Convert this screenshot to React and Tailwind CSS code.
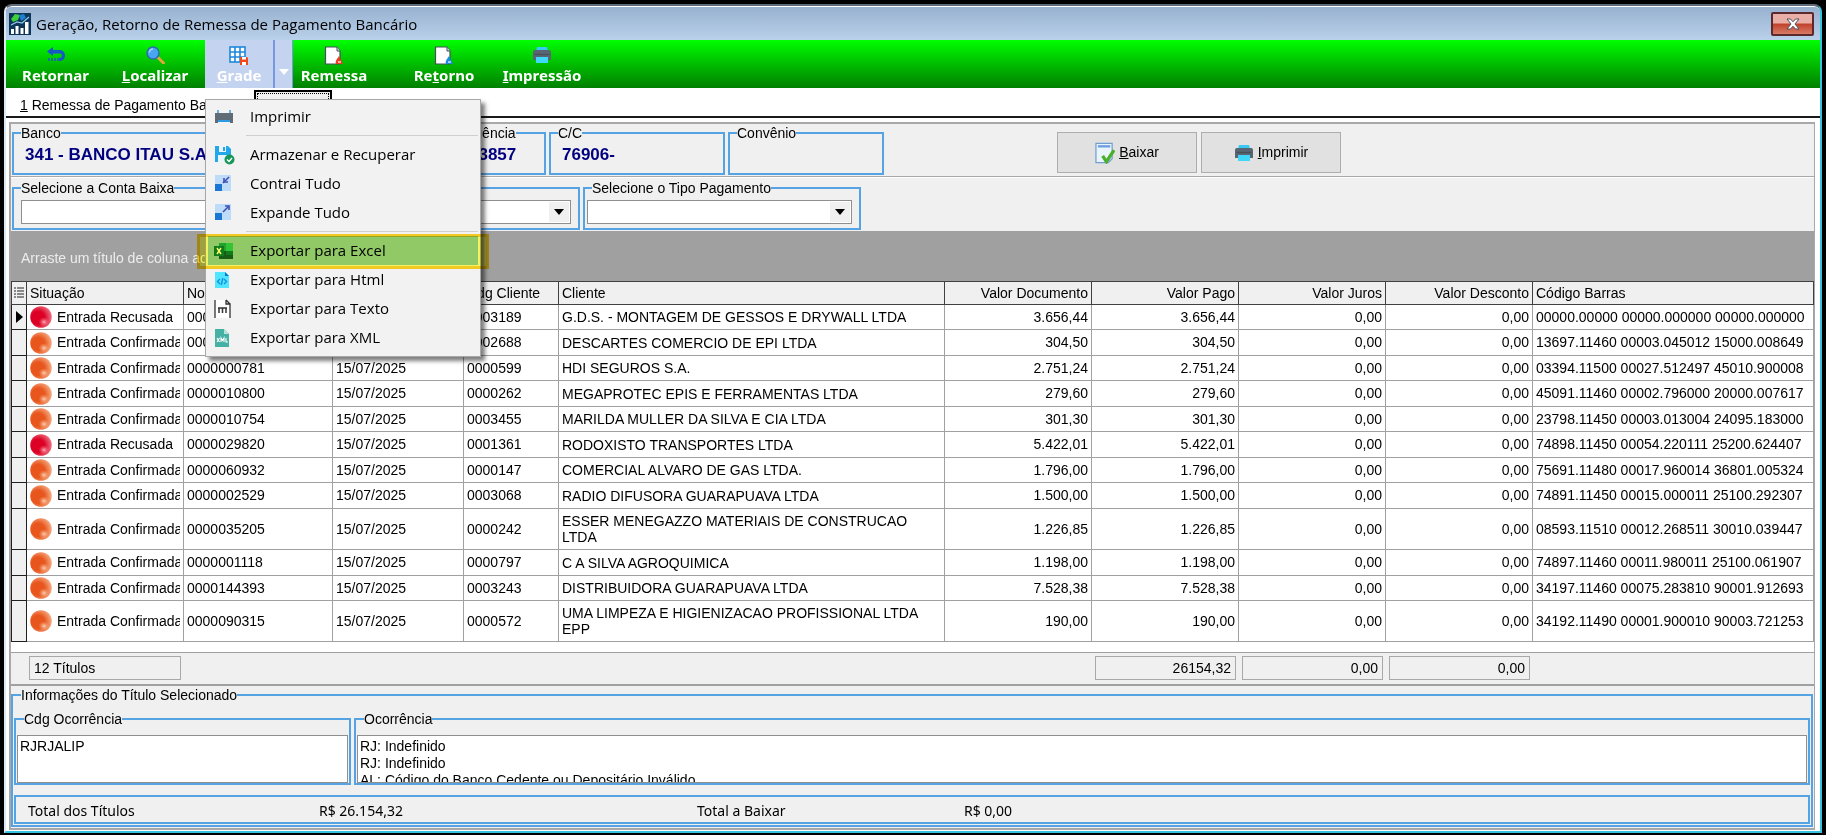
import clsx from "clsx";

const ROWS = [
    { ok: false, numero: "0000012231", codigo: "0003189", cliente: "G.D.S. - MONTAGEM DE GESSOS E DRYWALL LTDA", doc: "3.656,44", barras: "00000.00000 00000.000000 00000.000000" },
    { ok: true, numero: "0000015000", codigo: "0002688", cliente: "DESCARTES COMERCIO DE EPI LTDA", doc: "304,50", barras: "13697.11460 00003.045012 15000.008649" },
    { ok: true, numero: "0000000781", codigo: "0000599", cliente: "HDI SEGUROS S.A.", doc: "2.751,24", barras: "03394.11500 00027.512497 45010.900008" },
    { ok: true, numero: "0000010800", codigo: "0000262", cliente: "MEGAPROTEC EPIS E FERRAMENTAS LTDA", doc: "279,60", barras: "45091.11460 00002.796000 20000.007617" },
    { ok: true, numero: "0000010754", codigo: "0003455", cliente: "MARILDA MULLER DA SILVA E CIA LTDA", doc: "301,30", barras: "23798.11450 00003.013004 24095.183000" },
    { ok: false, numero: "0000029820", codigo: "0001361", cliente: "RODOXISTO TRANSPORTES LTDA", doc: "5.422,01", barras: "74898.11450 00054.220111 25200.624407" },
    { ok: true, numero: "0000060932", codigo: "0000147", cliente: "COMERCIAL ALVARO DE GAS LTDA.", doc: "1.796,00", barras: "75691.11480 00017.960014 36801.005324" },
    { ok: true, numero: "0000002529", codigo: "0003068", cliente: "RADIO DIFUSORA GUARAPUAVA LTDA", doc: "1.500,00", barras: "74891.11450 00015.000011 25100.292307" },
    { ok: true, numero: "0000035205", codigo: "0000242", cliente: "ESSER MENEGAZZO MATERIAIS DE CONSTRUCAO LTDA", doc: "1.226,85", barras: "08593.11510 00012.268511 30010.039447", tall: true },
    { ok: true, numero: "0000001118", codigo: "0000797", cliente: "C A SILVA AGROQUIMICA", doc: "1.198,00", barras: "74897.11460 00011.980011 25100.061907" },
    { ok: true, numero: "0000144393", codigo: "0003243", cliente: "DISTRIBUIDORA GUARAPUAVA LTDA", doc: "7.528,38", barras: "34197.11460 00075.283810 90001.912693" },
    { ok: true, numero: "0000090315", codigo: "0000572", cliente: "UMA LIMPEZA E HIGIENIZACAO PROFISSIONAL LTDA EPP", doc: "190,00", barras: "34192.11490 00001.900010 90003.721253", tall: true },
];

/* ---------- icons ---------- */

function AppIcon() {
    return (
        <svg width="22" height="22" viewBox="0 0 22 22" aria-hidden="true">
            <rect width="22" height="22" fill="#0d3557" />
            <path d="M2 6 6 1l5 1-2 5-5 2z" fill="#3ecf3a" />
            <path d="M10 2l5-1 2 4-5 3z" fill="#1f7fd0" />
            <path d="M2 12 8 9l5 1 7-6" stroke="#8fc6ee" strokeWidth="1.2" fill="none" />
            <path d="M2 21v-5h3v5zM6.500 21v-8h3v8zM11.500 21v-6h3v6zM16 21V9h3.500v12z" fill="#fff" />
        </svg>
    );
}

function BackIcon() {
    return (
        <svg width="20" height="18" viewBox="0 0 20 18" aria-hidden="true">
            <path d="M1 5.500 7 1v3h6c4 0 6 2.500 6 5.500S17 15 13.500 15H13v-3c2 0 3-1 3-2.500S15 7.500 13 7.500H7V10z" fill="#1757c9" />
            <path d="M3 12v3M6 12v3M9 12v3M12 12v3" stroke="#1757c9" strokeWidth="1.400" />
        </svg>
    );
}

function SearchIcon() {
    return (
        <svg width="20" height="18" viewBox="0 0 20 18" aria-hidden="true">
            <path d="m12.500 11 6 6" stroke="#e0a63c" strokeWidth="3" strokeLinecap="round" />
            <circle cx="8" cy="7" r="6" fill="#4aa5f0" stroke="#2c6dab" strokeWidth="1.500" />
            <path d="M4.500 6.500A3.500 3.500 0 0 1 8 3" stroke="#a8d8ff" strokeWidth="1.500" fill="none" />
        </svg>
    );
}

function GridIcon() {
    return (
        <svg width="20" height="19" viewBox="0 0 20 19" aria-hidden="true">
            <rect x="1" y="1" width="15" height="15" fill="#fff" stroke="#1e88dc" strokeWidth="1.600" />
            <path d="M6 1v15M11 1v15M1 6h15M1 11h15" stroke="#1e88dc" strokeWidth="1.600" />
            <path d="M11 11h7l1 1v7h-8z" fill="#f04a1c" />
            <path d="M13 11h4v2.500h-4zM13 16h4v3h-4z" fill="#fff" />
        </svg>
    );
}

function SheetIcon({ color }) {
    return (
        <svg width="20" height="19" viewBox="0 0 20 19" aria-hidden="true">
            <path d="M1.500 1H13l3 4v13H1.500z" fill="#fff" stroke="#45505c" strokeWidth="1.200" />
            <path d="M13 1v4h3" fill="#d7dde3" stroke="#45505c" strokeWidth="1" />
            <path d="m15 10 4 8h-7c-1-2 0-4 3-8z" fill={color} />
            <path d="M14 16h3" stroke="#fff" strokeWidth="1.200" />
        </svg>
    );
}

function PrinterIcon() {
    return (
        <svg width="20" height="18" viewBox="0 0 20 18" aria-hidden="true">
            <path d="M5 1h10l1 4H4z" fill="#38c8f5" />
            <path d="M1 6q0-2 2-2h14q2 0 2 2v8H1z" fill="#586572" />
            <path d="M4 11h12v6H4z" fill="#3fd8fb" />
            <path d="M2.500 8.500h15" stroke="#465059" strokeWidth="1.200" />
        </svg>
    );
}

function MenuPrinterIcon() {
    return (
        <svg width="20" height="16" viewBox="0 0 20 16" aria-hidden="true">
            <path d="M4 1v4M16 1v4" stroke="#3d9be0" strokeWidth="1.500" />
            <path d="M1 4h18v10h-3v-3H4v3H1z" fill="#5f6b77" />
            <path d="M4 11h12v2H4z" fill="#2b9be6" />
        </svg>
    );
}

function SaveIcon() {
    return (
        <svg width="21" height="20" viewBox="0 0 21 20" aria-hidden="true">
            <path d="M1 1h13l3 3v13H1z" fill="#22a7e8" />
            <path d="M5 1h7v6H5zM4 10h9v7H4z" fill="#e8f5fc" />
            <path d="M9 2h2v4H9z" fill="#22a7e8" />
            <circle cx="15.500" cy="14.500" r="5" fill="#17985a" />
            <path d="m13 14.500 2 2 3-3.500" stroke="#fff" strokeWidth="1.400" fill="none" />
        </svg>
    );
}

function CollapseIcon({ expand }) {
    return (
        <svg width="18" height="17" viewBox="0 0 18 17" aria-hidden="true">
            <rect x="1" width="16" height="16" fill="#bcdcfa" />
            <rect x="1" y="9" width="7" height="7" fill="#1976d2" />
            <path d="m9 8 6-6" stroke="#3f51b5" strokeWidth="1.600" />
            <path d={expand ? "M11 2h4v4" : "M10 3v4h4"} stroke="#3f51b5" strokeWidth="1.600" fill="none" />
        </svg>
    );
}

function ExcelIcon() {
    return (
        <svg width="20" height="18" viewBox="0 0 20 18" aria-hidden="true">
            <path d="M5 1h14v16H5z" fill="#185c37" />
            <path d="M5 1h7v8H5z" fill="#21a366" />
            <path d="M12 1h7v8h-7z" fill="#33c481" />
            <path d="M12 9h7v4h-7z" fill="#107c41" />
            <rect y="4" width="10" height="10" fill="#107c41" />
            <path d="m3 6 4 6M7 6l-4 6" stroke="#fff" strokeWidth="1.400" />
        </svg>
    );
}

function HtmlIcon() {
    return (
        <svg width="16" height="18" viewBox="0 0 16 18" aria-hidden="true">
            <path d="M1 1h10l4 4v12H1z" fill="#50e6ff" />
            <path d="M11 1v4h4z" fill="#0078d4" />
            <path d="M6 8l-2.500 2.500L6 13M10 8l2.500 2.500L10 13M8.800 7l-1.500 7" stroke="#1490df" strokeWidth="1.400" fill="none" />
        </svg>
    );
}

function TextIcon() {
    return (
        <svg width="17" height="20" viewBox="0 0 17 20" aria-hidden="true">
            <path d="M1 1h11l4 4v14H1z" fill="#fff" />
            <path d="M1 1v18M12 1v4h4v14M12 1l4 4" stroke="#333" strokeWidth="1.300" fill="none" />
            <path d="M4 9h9M5 9v5M8.500 9v5M12 9v5" stroke="#333" strokeWidth="1.500" />
        </svg>
    );
}

function XmlIcon() {
    return (
        <svg width="16" height="20" viewBox="0 0 16 20" aria-hidden="true">
            <path d="M1 1h9l5 5v13H1z" fill="#45b0a4" />
            <path d="M10 1v5h5z" fill="#b9e2dd" />
            <path d="m3 10 2.500 4M5.500 10 3 14M7 14v-4l1.500 2.500L10 10v4M12 10v4h2" stroke="#fff" strokeWidth="1.100" fill="none" />
        </svg>
    );
}

function CheckSheetIcon() {
    return (
        <svg width="20" height="22" viewBox="0 0 21 22" aria-hidden="true">
            <path d="M1 1h17v16l-4 4H1z" fill="#eaf4fd" stroke="#6f9fce" strokeWidth="1.300" />
            <path d="M3 4h13" stroke="#6f9fe0" strokeWidth="2.500" />
            <path d="m8 14 4 6 8-12" stroke="#4caf2e" strokeWidth="3.500" fill="none" />
        </svg>
    );
}

function Ball({ ok }) {
    const id = ok ? "ball-ok" : "ball-no";
    return (
        <svg width="22" height="22" viewBox="0 0 22 22" className="shrink-0" aria-hidden="true">
            <circle cx="11" cy="11" r="10.800" fill={`url(#${id})`} />
            <ellipse cx="14" cy="16" rx="5" ry="4.500" fill={`url(#${id}-glow)`} />
        </svg>
    );
}

function BallGradients() {
    return (
        <svg width="0" height="0" className="block h-0 w-0" aria-hidden="true">
            <defs>
                <radialGradient id="ball-ok" cx="0.36" cy="0.54" r="0.68">
                    <stop offset="0.450" stopColor="#e8561e" />
                    <stop offset="1" stopColor="#f7b48e" />
                </radialGradient>
                <radialGradient id="ball-ok-glow">
                    <stop offset="0" stopColor="#fcd3b8" />
                    <stop offset="1" stopColor="#f08a55" stopOpacity="0.200" />
                </radialGradient>
                <radialGradient id="ball-no" cx="0.36" cy="0.54" r="0.68">
                    <stop offset="0.450" stopColor="#dc0024" />
                    <stop offset="1" stopColor="#ef8090" />
                </radialGradient>
                <radialGradient id="ball-no-glow">
                    <stop offset="0" stopColor="#fbb4bd" />
                    <stop offset="1" stopColor="#ee4460" stopOpacity="0.200" />
                </radialGradient>
            </defs>
        </svg>
    );
}

/* ---------- building blocks ---------- */

function ToolButton({ icon, className, children }) {
    return (
        <button type="button" className={clsx("flex flex-col items-center pt-[5px] text-white", className)}>
            <span className="flex h-5 items-center">{icon}</span>
            <span className="font-['Noto_Sans',sans-serif] text-[15px] leading-5 font-bold">{children}</span>
        </button>
    );
}

function Group({ title, className, children }) {
    return (
        <fieldset className={clsx("min-w-0 border-2 border-[#55a3e2]", className)}>
            {title && <legend className="ml-[7px] leading-4">{title}</legend>}
            {children}
        </fieldset>
    );
}

function Combo({ label, className }) {
    return (
        <div className={clsx("mt-1 grid h-6", className)}>
            <select aria-label={label} className="col-start-1 row-start-1 appearance-none border border-[#8f8f8f] bg-white" />
            <span className="pointer-events-none col-start-1 row-start-1 m-0.5 flex w-5 items-center justify-center justify-self-end bg-[#f0f0f0]">
                <svg width="10" height="6" viewBox="0 0 10 6" aria-hidden="true">
                    <path d="M0 0h10L5 6z" fill="#000" />
                </svg>
            </span>
        </div>
    );
}

function MenuItem({ icon, active, children }) {
    return (
        <li className={clsx("relative h-[29px]", active && "bg-[#91c9f7]")}>
            <button type="button" role="menuitem" className="flex h-full w-full items-center text-left">
                <span className="flex w-[42px] shrink-0 items-center pl-1.5">{icon}</span>
                {children}
            </button>
            {active && (
                <span className="pointer-events-none absolute -inset-x-[11px] -top-0.5 -bottom-1 border-3 border-[#ffd424] bg-[#ffff6a] mix-blend-multiply" />
            )}
        </li>
    );
}

function GridMenu() {
    const line = <li role="separator" className="ml-[38px] flex h-[9px] items-center"><span className="h-px w-full bg-[#d0d0d0]" /></li>;
    return (
        <ul
            role="menu"
            className="absolute top-full left-0 mt-[11px] w-[276px] border border-[#a8a8a8] bg-[#f2f2f2] px-0.5 pt-0.5 pb-1 font-['Open_Sans',sans-serif] text-[15px] text-black shadow-[4px_4px_4px_rgba(0,0,0,0.5)]"
        >
            <MenuItem icon={<MenuPrinterIcon />}>Imprimir</MenuItem>
            {line}
            <MenuItem icon={<SaveIcon />}>Armazenar e Recuperar</MenuItem>
            <MenuItem icon={<CollapseIcon />}>Contrai Tudo</MenuItem>
            <MenuItem icon={<CollapseIcon expand />}>Expande Tudo</MenuItem>
            {line}
            <MenuItem icon={<ExcelIcon />} active>Exportar para Excel</MenuItem>
            <MenuItem icon={<HtmlIcon />}>Exportar para Html</MenuItem>
            <MenuItem icon={<TextIcon />}>Exportar para Texto</MenuItem>
            <MenuItem icon={<XmlIcon />}>Exportar para XML</MenuItem>
        </ul>
    );
}

function TitleBar() {
    return (
        <header className="flex h-[34px] items-center rounded-t-md border-t border-white bg-linear-to-b from-[#98b1cf] to-[#b9d1ea] pr-1.5 pl-[3px]">
            <AppIcon />
            <h1 className="ml-[5px] flex-1 pt-0.5 font-['Open_Sans',sans-serif] text-[15px]">
                Geração, Retorno de Remessa de Pagamento Bancário
            </h1>
            <button
                type="button"
                aria-label="Fechar"
                className="flex h-6 w-[43px] items-center justify-center rounded-xs border-2 border-[#5c2a2c] bg-linear-to-b from-[#e9aea5] from-45% via-[#c1402a] via-50% to-[#d67a65]"
            >
                <svg width="14" height="12" viewBox="0 0 14 12" aria-hidden="true">
                    <path d="M1 1h3.500L7 3.800 9.500 1H13L9 6l4 5H9.500L7 8.200 4.500 11H1l4-5z" fill="#fff" stroke="#4d5061" strokeWidth="1" />
                </svg>
            </button>
        </header>
    );
}

function Toolbar() {
    return (
        <div className="flex h-12 bg-linear-to-b from-[#00ff00] to-[#008000]">
            <ToolButton icon={<BackIcon />} className="w-[99px]">Retornar</ToolButton>
            <ToolButton icon={<SearchIcon />} className="w-[100px]"><u>L</u>ocalizar</ToolButton>
            <div className="relative flex">
                <ToolButton icon={<GridIcon />} className="w-[70px] border-r-2 border-[#7797e0] bg-[#c4d3f0]"><u>G</u>rade</ToolButton>
                <button type="button" aria-label="Opções da grade" className="flex w-[18px] items-center justify-center border-r border-[#7797e0] bg-[#c4d3f0] pt-4">
                    <svg width="10" height="6" viewBox="0 0 10 6" aria-hidden="true">
                        <path d="M0 0h10L5 6z" fill="#fff" />
                    </svg>
                </button>
                <GridMenu />
            </div>
            <ToolButton icon={<SheetIcon color="#ee3a24" />} className="w-[82px]">Remessa</ToolButton>
            <ToolButton icon={<SheetIcon color="#1e88e5" />} className="ml-7 w-[82px]">Re<u>t</u>orno</ToolButton>
            <ToolButton icon={<PrinterIcon />} className="ml-4 w-[82px]"><u>I</u>mpressão</ToolButton>
        </div>
    );
}

function Filters() {
    const value = "pt-1 pl-[11px] text-[17px] leading-5 font-bold text-[#000080]";
    const button = "flex h-[41px] w-[140px] items-center justify-center gap-1 border border-[#adadad] bg-[#e1e1e1]";
    return (
        <>
            <div className="flex gap-[3px] border-b border-[#a8a8a8] px-px py-px">
                <Group title="Banco" className="h-[50px] w-[441px]"><p className={value}>341 - BANCO ITAU S.A.</p></Group>
                <Group title="Agência" className="h-[50px] w-[90px]"><p className={value}>03857</p></Group>
                <Group title="C/C" className="h-[50px] w-[176px]"><p className={value}>76906-</p></Group>
                <Group title="Convênio" className="h-[50px] w-[156px]" />
                <div className="ml-[170px] flex gap-1 pt-[7px]">
                    <button type="button" className={button}><CheckSheetIcon /><span><u>B</u>aixar</span></button>
                    <button type="button" className={button}><PrinterIcon /><span><u>I</u>mprimir</span></button>
                </div>
            </div>
            <div className="flex gap-[3px] border-t border-white px-px pt-0.5 pb-px">
                <Group title="Selecione a Conta Baixa" className="h-[50px] w-[284px]"><Combo label="Conta Baixa" className="mx-[7px]" /></Group>
                <Group title="Selecione a Forma Baixa" className="h-[50px] w-[281px]"><Combo label="Forma Baixa" className="mx-[7px]" /></Group>
                <Group title="Selecione o Tipo Pagamento" className="h-[50px] w-[278px]"><Combo label="Tipo Pagamento" className="mr-[7px] ml-0.5" /></Group>
            </div>
        </>
    );
}

function TitlesTable() {
    const th = "h-6 border-t border-r border-b border-[#404040] px-[3px] font-normal whitespace-nowrap";
    const td = "overflow-hidden border-r border-b border-[#a0a0a0] px-[3px] whitespace-nowrap";
    return (
        <table className="w-full table-fixed border-separate border-spacing-0 bg-white">
            <colgroup>
                <col className="w-4" />
                <col className="w-[157px]" />
                <col className="w-[149px]" />
                <col className="w-[131px]" />
                <col className="w-[95px]" />
                <col className="w-[386px]" />
                <col className="w-[147px]" />
                <col className="w-[147px]" />
                <col className="w-[147px]" />
                <col className="w-[147px]" />
                <col />
            </colgroup>
            <thead>
                <tr className="bg-[#f0f0f0] text-left">
                    <th className="border border-[#404040]">
                        <svg width="10" height="12" viewBox="0 0 10 12" className="mx-auto" aria-hidden="true">
                            <path d="M0 1h2M3 1h7M0 4h2M3 4h7M0 7h2M3 7h7M0 10h2M3 10h7" stroke="#222" />
                        </svg>
                    </th>
                    <th className={th}>Situação</th>
                    <th className={th}>Nosso Número</th>
                    <th className={th}>Vencimento</th>
                    <th className={th}>Cdg Cliente</th>
                    <th className={th}>Cliente</th>
                    <th className={clsx(th, "text-right")}>Valor Documento</th>
                    <th className={clsx(th, "text-right")}>Valor Pago</th>
                    <th className={clsx(th, "text-right")}>Valor Juros</th>
                    <th className={clsx(th, "text-right")}>Valor Desconto</th>
                    <th className={th}>Código Barras</th>
                </tr>
            </thead>
            <tbody>
                {ROWS.map((r, i) => (
                    <tr key={r.numero} className={r.tall ? "h-[41px]" : "h-[25px] even:h-[26px]"}>
                        <td className="border-x border-b border-[#202020] bg-[#f0f0f0]">
                            {i === 0 && (
                                <svg width="7" height="12" viewBox="0 0 7 12" className="mx-auto" aria-hidden="true">
                                    <path d="M0 0l7 6-7 6z" fill="#000" />
                                </svg>
                            )}
                        </td>
                        <td className={td}>
                            <div className="flex items-center gap-[5px] overflow-hidden">
                                <Ball ok={r.ok} />
                                {r.ok ? "Entrada Confirmada" : "Entrada Recusada"}
                            </div>
                        </td>
                        <td className={td}>{r.numero}</td>
                        <td className={td}>15/07/2025</td>
                        <td className={td}>{r.codigo}</td>
                        <td className={clsx("border-r border-b border-[#a0a0a0] px-[3px] leading-4", r.tall ? "pr-4" : "whitespace-nowrap")}>{r.cliente}</td>
                        <td className={clsx(td, "text-right")}>{r.doc}</td>
                        <td className={clsx(td, "text-right")}>{r.doc}</td>
                        <td className={clsx(td, "text-right")}>0,00</td>
                        <td className={clsx(td, "text-right")}>0,00</td>
                        <td className={td}>{r.barras}</td>
                    </tr>
                ))}
            </tbody>
        </table>
    );
}

function Totals() {
    const box = "h-6 border border-[#a8a8a8] px-1 text-right";
    return (
        <div className="mt-2.5 flex items-center border-t border-b-2 border-[#a0a0a0] bg-[#f0f0f0] pt-[3px] pb-1 pl-[18px]">
            <input readOnly aria-label="Quantidade" defaultValue="12 Títulos" className="h-6 w-[152px] border border-[#a8a8a8] px-1" />
            <div className="ml-[914px] flex gap-1.5">
                <input readOnly aria-label="Total pago" defaultValue="26154,32" className={clsx(box, "w-[141px]")} />
                <input readOnly aria-label="Total juros" defaultValue="0,00" className={clsx(box, "w-[141px]")} />
                <input readOnly aria-label="Total desconto" defaultValue="0,00" className={clsx(box, "w-[141px]")} />
            </div>
        </div>
    );
}

function SelectedInfo() {
    const area = "mt-2 block h-12 w-full resize-none overflow-hidden border border-[#8f8f8f] bg-white px-0.5 pt-0.5 leading-[17px]";
    return (
        <Group title="Informações do Título Selecionado" className="mt-px mr-px px-px pb-px">
            <div className="mt-2 flex gap-[3px]">
                <Group title="Cdg Ocorrência" className="w-[337px] px-px">
                    <textarea readOnly aria-label="Cdg Ocorrência" className={area} defaultValue="RJRJALIP" />
                </Group>
                <Group title="Ocorrência" className="flex-1 px-px">
                    <textarea
                        readOnly
                        aria-label="Ocorrência"
                        className={area}
                        defaultValue={"RJ: Indefinido\nRJ: Indefinido\nAL: Código do Banco Cedente ou Depositário Inválido"}
                    />
                </Group>
            </div>
            <Group className="mt-2.5">
                <dl className="flex h-[25px] items-center pt-0.5 pl-3 font-['Noto_Sans',sans-serif] text-[14px]">
                    <dt className="w-[291px]">Total dos Títulos</dt>
                    <dd className="w-[378px]">R$ 26.154,32</dd>
                    <dt className="w-[267px]">Total a Baixar</dt>
                    <dd>R$ 0,00</dd>
                </dl>
            </Group>
        </Group>
    );
}

export default function App() {
    return (
        <div className="min-h-screen bg-black pt-1 pr-1 pb-px pl-1 font-['Liberation_Sans',sans-serif] text-[14px] text-black">
            <BallGradients />
            <div className="rounded-t-lg border-t-2 border-r-2 border-b-2 border-l-2 border-t-[#5f6b7a] border-r-[#35c4e0] border-b-[#35c4e0] border-l-[#dde8f5]">
                <TitleBar />
                <Toolbar />
                <nav className="flex h-[30px] items-center gap-4 border-b-2 border-[#1a1a1a] bg-white pl-3.5" role="tablist">
                    <button type="button" role="tab" className="w-[218px] pt-1.5 text-left whitespace-nowrap"><u>1</u> Remessa de Pagamento Bancário</button>
                    <button type="button" role="tab" aria-label="Retorno" className="h-[26px] w-[78px] self-end border-2 border-b-0 border-black bg-[#f0f0f0] p-px">
                        <span className="block h-full border border-b-0 border-dotted border-black" />
                    </button>
                </nav>
                <main className="bg-white pt-1 pr-[5px] pb-px pl-[3px]">
                    <div className="border-t-2 border-r border-b-2 border-l-2 border-[#a8a8a8] bg-[#f0f0f0] pb-px">
                        <Filters />
                        <p className="flex h-[50px] items-center bg-[#a0a0a0] pt-1 pl-2.5 text-[#ececec]">
                            Arraste um título de coluna aqui para agrupar
                        </p>
                        <div className="bg-white">
                            <TitlesTable />
                            <Totals />
                        </div>
                        <SelectedInfo />
                    </div>
                </main>
            </div>
        </div>
    );
}
